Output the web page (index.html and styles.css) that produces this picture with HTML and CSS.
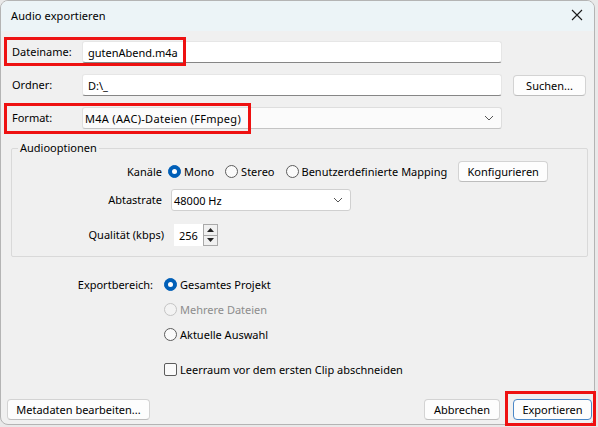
FILE: index.html
```html
<!DOCTYPE html>
<html lang="de">
<head>
<meta charset="utf-8">
<title>Audio exportieren</title>
<link rel="stylesheet" href="styles.css">
</head>
<body>
<div class="dialog">
  <div class="titlebar">
    <span class="title">Audio exportieren</span>
    <svg class="close" width="12" height="12" viewBox="0 0 12 12"><path d="M1 1 L11 11 M11 1 L1 11" stroke="#1a1a1a" stroke-width="1.1" fill="none"/></svg>
  </div>
  <div class="main">
    <div class="file-grid">
      <span class="lbl">Dateiname:</span>
      <div class="input">gutenAbend.m4a</div>
      <span></span>
      <span class="lbl">Ordner:</span>
      <div class="input">D:\_</div>
      <button class="btn btn-search">Suchen...</button>
      <span class="lbl">Format:</span>
      <div class="combo combo-format"><span class="combo-text">M4A (AAC)-Dateien (FFmpeg)</span><svg class="chev" width="10" height="6" viewBox="0 0 10 6"><path d="M1 1 L5 5 L9 1" stroke="#555" stroke-width="1" fill="none"/></svg></div>
      <span></span>
    </div>

    <fieldset class="group">
      <legend>Audiooptionen</legend>
      <div class="opt-grid">
        <span class="olbl olbl-k">Kanäle</span>
        <div class="channels">
          <span class="radio on"></span><span class="rtext">Mono</span>
          <span class="radio"></span><span class="rtext">Stereo</span>
          <span class="radio"></span><span class="rtext">Benutzerdefinierte Mapping</span>
          <button class="btn btn-conf">Konfigurieren</button>
        </div>
        <span class="olbl">Abtastrate</span>
        <div class="combo combo-rate">48000 Hz<svg class="chev" width="10" height="6" viewBox="0 0 10 6"><path d="M1 1 L5 5 L9 1" stroke="#555" stroke-width="1" fill="none"/></svg></div>
        <span class="olbl olbl-q">Qualität (kbps)</span>
        <div class="spin">
          <div class="spin-val">256</div>
          <div class="spin-btns">
            <span class="spin-up"><svg width="7" height="4" viewBox="0 0 7 4"><path d="M0 4 L3.5 0 L7 4 Z" fill="#222"/></svg></span>
            <span class="spin-down"><svg width="7" height="4" viewBox="0 0 7 4"><path d="M0 0 L3.5 4 L7 0 Z" fill="#222"/></svg></span>
          </div>
        </div>
      </div>
    </fieldset>

    <div class="range">
      <span class="rlbl">Exportbereich:</span>
      <div class="ritem"><span class="radio on"></span><span class="rtext">Gesamtes Projekt</span></div>
      <span></span>
      <div class="ritem disabled"><span class="radio"></span><span class="rtext">Mehrere Dateien</span></div>
      <span></span>
      <div class="ritem"><span class="radio"></span><span class="rtext">Aktuelle Auswahl</span></div>
      <span></span>
      <div class="ritem check-row"><span class="check"></span><span class="rtext">Leerraum vor dem ersten Clip abschneiden</span></div>
    </div>
  </div>
  <div class="footer">
    <button class="btn btn-meta">Metadaten bearbeiten...</button>
    <span class="spacer"></span>
    <button class="btn btn-cancel">Abbrechen</button>
    <button class="btn btn-export">Exportieren</button>
  </div>

  <div class="mark mark-name"></div>
  <div class="mark mark-format"></div>
  <div class="mark mark-export"></div>
</div>
</body>
</html>
```

FILE: styles.css
```css
* { box-sizing: border-box; }
html, body { margin: 0; padding: 0; }
body {
  width: 598px;
  height: 427px;
  background: #e9e9e9;
  font-family: "Noto Sans", "Open Sans", sans-serif;
  font-size: 11px;
  color: #000;
  overflow: hidden;
}
.dialog {
  position: relative;
  width: 595px;
  height: 425px;
  background: #f0f0f0;
  border: 1px solid #b4b4b4;
  border-radius: 8px;
  display: flex;
  flex-direction: column;
}
.titlebar {
  height: 30px;
  background: #ecf4f7;
  border-radius: 7px 7px 0 0;
  display: flex;
  align-items: center;
  padding: 0 10px;
}
.title { flex: 1; line-height: 16px; letter-spacing: 0.1px; }
.close { margin-right: 1px; margin-top: -2px; }

.main {
  flex: 1;
  padding: 10px 0 0 10px;
}
.file-grid {
  display: grid;
  grid-template-columns: 71px 419px auto;
  row-gap: 11px;
  align-items: center;
  padding-left: 1px;
}
.lbl { line-height: 16px; }
.input {
  height: 22px;
  background: #fff;
  border: 1px solid #e6e6e6;
  border-bottom: 1px solid #868686;
  border-radius: 3px;
  padding: 0 5px;
  display: flex;
  align-items: center;
  margin-left: -1px;
}
.combo {
  height: 22px;
  background: #fbfbfb;
  border: 1px solid #dedede;
  border-bottom-color: #c4c4c4;
  border-radius: 3px;
  padding: 0 3px;
  display: flex;
  align-items: center;
  position: relative;
}
.combo-format { margin-left: -1px; padding-left: 2px; }
.combo-text { letter-spacing: 0.3px; }
.chev { margin-left: auto; margin-right: 4px; }
.btn {
  font: inherit;
  color: #000;
  height: 21px;
  background: #fdfdfd;
  border: 1px solid #d3d3d3;
  border-bottom-color: #bdbdbd;
  border-radius: 4px;
  padding: 0;
  line-height: 17px;
}
.btn-search { width: 73px; margin-left: 11px; }

.group {
  margin: 11px 0 0 0;
  width: 577px;
  border: 1px solid #d9d9d9;
  border-radius: 2px;
  padding: 5px 0 10px 0;
  min-width: 0;
}
.group legend {
  margin-left: 6px;
  padding: 0 2px;
  line-height: 16px;
}
.opt-grid {
  display: grid;
  grid-template-columns: 150px auto;
  grid-template-rows: 28px 35px 22px;
  align-items: start;
}
.olbl { text-align: right; line-height: 22px; }
.olbl-k { line-height: 21px; }
.olbl-q { margin-right: -2px; }
.channels {
  display: flex;
  align-items: center;
  margin-left: 6px;
}
.radio {
  width: 13px;
  height: 13px;
  border-radius: 50%;
  border: 1px solid #5c5c5c;
  background: #fafafa;
  flex: none;
  position: relative;
}
.radio.on {
  border-color: #005fb8;
  background: #005fb8;
}
.radio.on::after {
  content: "";
  position: absolute;
  left: 3px; top: 3px;
  width: 5px; height: 5px;
  border-radius: 50%;
  background: #fff;
}
.rtext { margin-left: 3px; margin-right: 11px; line-height: 16px; white-space: nowrap; }
.btn-conf { width: 90px; margin-left: 0; }
.combo-rate {
  width: 180px;
  background: #fff;
  border-color: #d0d0d0;
  margin-left: 9px;
  padding-left: 2px;
}
.spin {
  display: flex;
  height: 22px;
  margin-left: 12px;
  width: 44px;
}
.spin-val {
  width: 29px;
  background: #fff;
  padding-left: 5px;
  display: flex;
  align-items: center;
}
.spin-btns {
  width: 15px;
  border: 1px solid #a9a9a9;
  background: #f0f0f0;
  display: flex;
  flex-direction: column;
}
.spin-btns span {
  flex: 1;
  display: flex;
  align-items: center;
  justify-content: center;
}
.spin-up { border-bottom: 1px solid #a9a9a9; }

.range {
  margin-top: 15px;
  display: grid;
  grid-template-columns: 142px auto;
  grid-template-rows: 25px 25px 25px 35px;
  align-items: center;
}
.rlbl { text-align: right; line-height: 16px; }
.ritem { display: flex; align-items: center; margin-left: 11px; height: 25px; }
.ritem .rtext { margin-left: 3px; }
.disabled .radio { border-color: #c4c4c4; background: #f3f3f3; }
.disabled .rtext { color: #8d8d8d; }
.check-row { align-self: end; }
.check {
  width: 13px;
  height: 13px;
  border: 1px solid #5c5c5c;
  border-radius: 2px;
  background: #fafafa;
}

.footer {
  display: flex;
  align-items: center;
  padding: 0 2px 4px 6px;
}
.spacer { flex: 1; }
.btn-meta { width: 143px; }
.btn-cancel { width: 76px; margin-right: 13px; }
.btn-export { width: 79px; border-color: #4a87c7; }

.mark {
  position: absolute;
  border: 3px solid #ee1111;
}
.mark-name { left: 3px; top: 36px; width: 182px; height: 29px; }
.mark-format { left: 3px; top: 102px; width: 247px; height: 31px; }
.mark-export { left: 504px; top: 390px; width: 91px; height: 35px; }
```
